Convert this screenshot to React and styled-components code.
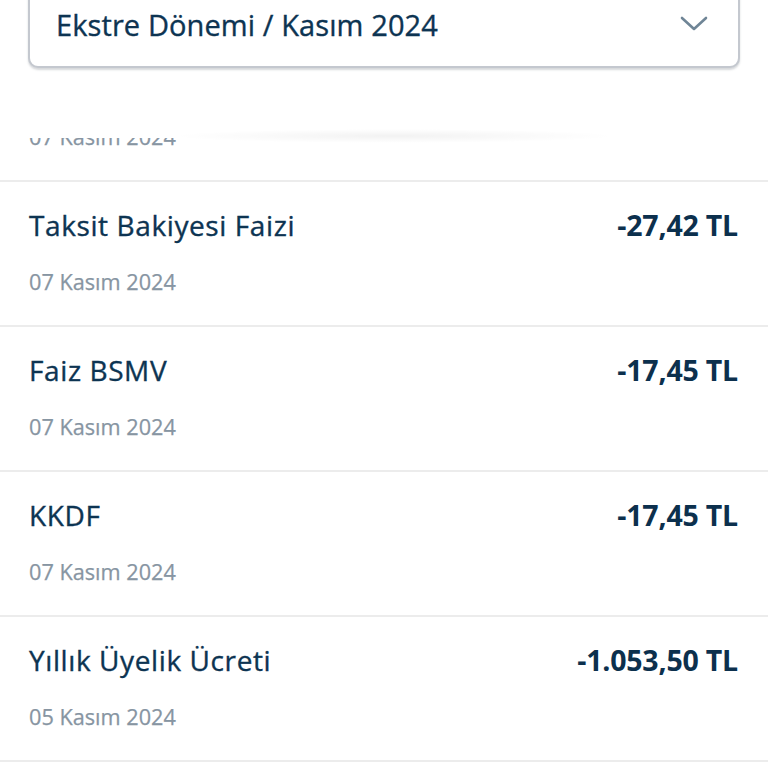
import React from "react";
import styled, { createGlobalStyle } from "styled-components";

const Global = createGlobalStyle`
  html, body { margin: 0; padding: 0; background: #ffffff; }
  body { font-family: "Open Sans", "Noto Sans", sans-serif; -webkit-font-smoothing: antialiased; }
`;

const Page = styled.div`
  width: 768px;
  height: 768px;
  overflow: hidden;
  background: #ffffff;
  display: flex;
  flex-direction: column;
`;

const Header = styled.header`
  position: relative;
  z-index: 2;
  height: 138px;
  flex: none;
  background: #ffffff;
  padding: 0 28px;
  box-sizing: border-box;
  &::after {
    content: "";
    position: absolute;
    left: 170px;
    right: 150px;
    bottom: -5px;
    height: 14px;
    background: radial-gradient(ellipse at center, rgba(0,0,0,0.05) 0%, rgba(0,0,0,0) 70%);
  }
`;

const Select = styled.button`
  width: 100%;
  height: 88px;
  margin-top: -20px;
  box-sizing: border-box;
  border: 2px solid #c4c8cf;
  border-radius: 10px;
  background: #ffffff;
  box-shadow: 0 2px 2px rgba(120, 125, 135, 0.3);
  display: flex;
  align-items: flex-end;
  justify-content: space-between;
  padding: 0 30px 26px 26px;
  font-family: inherit;
  cursor: pointer;
`;

const SelectLabel = styled.span`
  font-size: 29px;
  font-weight: 500;
  color: #0d3452;
  line-height: 1;
  margin-bottom: 1px;
  letter-spacing: 0.1px;
  -webkit-text-stroke: 0.35px currentColor;
`;

const Chevron = styled.svg`
  width: 28px;
  height: 16px;
  margin-bottom: 8px;
`;

const ListViewport = styled.div`
  flex: 1;
  overflow: hidden;
  position: relative;
`;

const List = styled.ul`
  list-style: none;
  margin: -101px 0 0;
  padding: 0;
`;

const Row = styled.li`
  height: 145px;
  box-sizing: border-box;
  border-bottom: 2px solid #ececec;
  padding: 26px 30px 0 29px;
  display: grid;
  grid-template-columns: 1fr auto;
  grid-template-rows: 34px 44px;
  row-gap: 26px;
  align-items: center;
`;

const Title = styled.span`
  font-size: 28px;
  font-weight: 500;
  color: #0d3452;
  line-height: 34px;
  letter-spacing: 0.6px;
  -webkit-text-stroke: 0.35px currentColor;
`;

const Amount = styled.span`
  font-size: 28.5px;
  font-weight: 700;
  color: #0c304d;
  line-height: 34px;
  text-align: right;
  letter-spacing: -0.2px;
`;

const DateText = styled.span`
  grid-column: 1 / -1;
  font-size: 21.7px;
  font-weight: 500;
  color: #8795a2;
  line-height: 28px;
  align-self: start;
  -webkit-text-stroke: 0.25px currentColor;
`;

const items = [
  { title: "Faiz", amount: "-27,42 TL", date: "07 Kasım 2024" },
  { title: "Taksit Bakiyesi Faizi", amount: "-27,42 TL", date: "07 Kasım 2024" },
  { title: "Faiz BSMV", amount: "-17,45 TL", date: "07 Kasım 2024" },
  { title: "KKDF", amount: "-17,45 TL", date: "07 Kasım 2024" },
  { title: "Yıllık Üyelik Ücreti", amount: "-1.053,50 TL", date: "05 Kasım 2024" },
  { title: "Nakit Avans", amount: "-0,00 TL", date: "01 Kasım 2024" },
];

export default function App() {
  return (
    <>
      <Global />
      <Page>
        <Header>
          <Select type="button">
            <SelectLabel>Ekstre Dönemi / Kasım 2024</SelectLabel>
            <Chevron viewBox="0 0 28 16" fill="none">
              <path d="M2 2 L14 13 L26 2" stroke="#6f8596" strokeWidth="2.6" strokeLinecap="round" strokeLinejoin="round" />
            </Chevron>
          </Select>
        </Header>
        <ListViewport>
          <List>
            {items.map((it, i) => (
              <Row key={i}>
                <Title>{it.title}</Title>
                <Amount>{it.amount}</Amount>
                <DateText>{it.date}</DateText>
              </Row>
            ))}
          </List>
        </ListViewport>
      </Page>
    </>
  );
}
